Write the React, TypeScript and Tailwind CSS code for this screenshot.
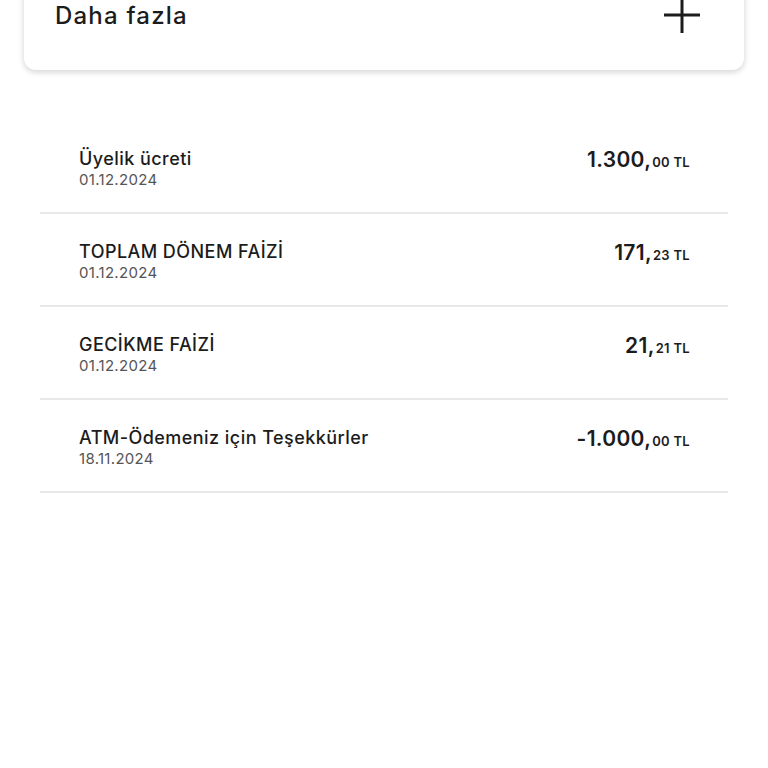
import React from 'react';

const rows = [
  { title: 'Üyelik ücreti', date: '01.12.2024', whole: '1.300', cents: '00' },
  { title: 'TOPLAM DÖNEM FAİZİ', date: '01.12.2024', whole: '171', cents: '23' },
  { title: 'GECİKME FAİZİ', date: '01.12.2024', whole: '21', cents: '21' },
  { title: 'ATM-Ödemeniz için Teşekkürler', date: '18.11.2024', whole: '-1.000', cents: '00' },
];

export default function App() {
  return (
    <div
      className="w-[768px] h-[768px] overflow-hidden bg-white text-[#1c1c1c]"
      style={{ fontFamily: 'Inter, "Noto Sans", sans-serif' }}
    >
      <div className="mx-[24px] -mt-[20px] h-[90px] rounded-[12px] bg-white shadow-[0_2px_6px_rgba(0,0,0,0.18)] flex items-start justify-between pl-[31px] pr-[44px] pt-[20px]">
        <span className="text-[24px] leading-[32px] font-medium tracking-[1.2px]">Daha fazla</span>
        <svg width="36" height="40" viewBox="0 0 36 40" className="-mt-[5px]">
          <path d="M18 0 V38 M0 20 H36" stroke="#1c1c1c" strokeWidth="3" />
        </svg>
      </div>

      <div className="mt-[51px] mx-[40px]">
        {rows.map((r) => (
          <div
            key={r.title}
            className="h-[93px] border-b-2 border-[#e8e8e8] flex items-center justify-between pl-[39px] pr-[38px]"
          >
            <div className="flex flex-col mt-[4px]">
              <span className="text-[18px] leading-[22px] font-medium tracking-[0.45px]">{r.title}</span>
              <span className="text-[15px] leading-[20px] text-[#555] tracking-[0.3px]">{r.date}</span>
            </div>
            <div className="flex items-baseline -mt-[14px]">
              <span className="text-[21px] font-semibold tracking-[0.3px]">{r.whole},</span>
              <span className="text-[13px] font-semibold ml-[1px] tracking-[0.3px]">{r.cents} TL</span>
            </div>
          </div>
        ))}
      </div>
    </div>
  );
}
